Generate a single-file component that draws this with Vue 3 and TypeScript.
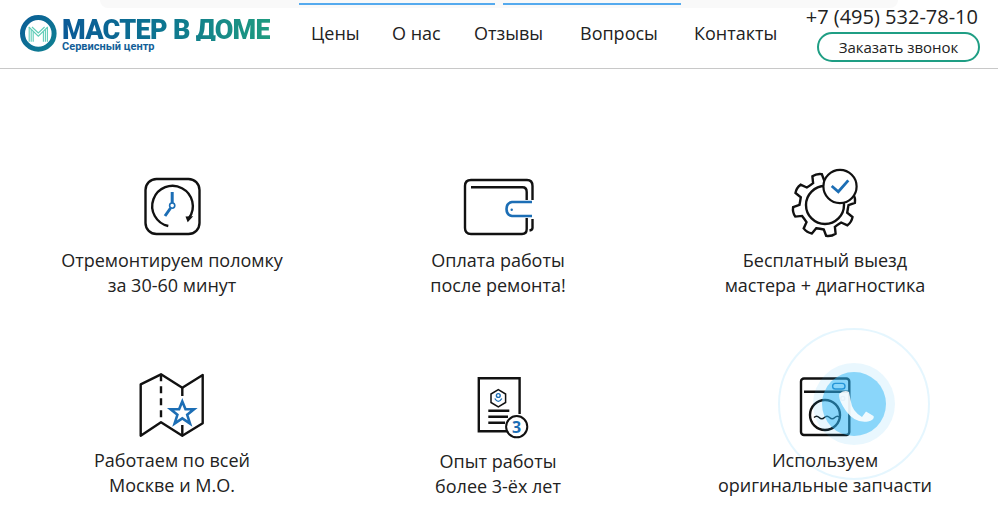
<script setup lang="ts">
const nav = ['Цены', 'О нас', 'Отзывы', 'Вопросы', 'Контакты']

function gear(cx: number, cy: number, outer: number, valley: number, teeth: number, start: number): string {
  const pts: string[] = []
  const step = (Math.PI * 2) / teeth
  for (let i = 0; i < teeth; i++) {
    const a = start + i * step
    const at = (r: number, d: number) =>
      `${(cx + r * Math.cos(a + d * step)).toFixed(1)} ${(cy + r * Math.sin(a + d * step)).toFixed(1)}`
    pts.push(`${i === 0 ? 'M' : 'L'}${at(valley, -0.3)}`)
    pts.push(`L${at(outer, -0.2)}`)
    pts.push(`Q${at(outer + 1.5, 0)} ${at(outer, 0.2)}`)
    pts.push(`L${at(valley, 0.3)}`)
    pts.push(`Q${at(valley - 0.5, 0.5)} ${at(valley, 0.7)}`)
  }
  return pts.join(' ') + ' Z'
}
const gearPath = gear(824, 205, 31, 24.5, 8, (-103 * Math.PI) / 180)
</script>

<template>
  <div class="page">
    <div class="strip">
      <span class="bar bar-a"></span>
      <span class="bar bar-b"></span>
    </div>

    <header class="header">
      <a class="logo">
        <svg class="logo-mark" viewBox="18 13 40 40" width="40" height="40">
          <defs>
            <linearGradient id="ring" x1="0" y1="0" x2="1" y2="1">
              <stop offset="0" stop-color="#0a5d96" />
              <stop offset="1" stop-color="#0f8092" />
            </linearGradient>
          </defs>
          <circle cx="38.3" cy="33.4" r="15.8" fill="none" stroke="url(#ring)" stroke-width="5" />
          <g fill="none" stroke="#5fcdb8" stroke-width="1.1">
            <path d="M29.2 41.7V27.5M31.2 41.7V29.5M33.2 41.7V31.5" />
            <path d="M47.4 41.7V27.5M45.4 41.7V29.5M43.4 41.7V31.5" />
            <path d="M28.8 27L38.3 36.2L47.8 27" />
            <path d="M32 27L38.3 33L44.6 27" />
          </g>
        </svg>
        <span class="logo-text">
          <span class="logo-name">МАСТЕР В ДОМЕ</span>
          <span class="logo-sub">Сервисный центр</span>
        </span>
      </a>

      <nav class="nav">
        <a v-for="item in nav" :key="item" class="nav-link">{{ item }}</a>
      </nav>

      <div class="contact">
        <span class="phone">+7 (495) 532-78-10</span>
        <button class="call" type="button">Заказать звонок</button>
      </div>
    </header>

    <main class="features">
      <section class="feature">
        <svg class="icon" viewBox="117 168 110 80" width="110" height="80">
          <rect x="145.5" y="179" width="54" height="55" rx="11" class="ink" />
          <path d="M168.3 226A20.3 20.3 0 1 1 189 218" class="ink" />
          <path d="M185.5 216.5L193.2 216.2L187.7 222.3Z" fill="#111" />
          <path d="M172.2 192V203M165 216L170.6 208" class="blue heavy" />
          <circle cx="172.2" cy="205.6" r="2.6" fill="#fff" stroke="#1c6eb5" stroke-width="1.6" />
        </svg>
        <p>Отремонтируем поломку<br />за 30-60 минут</p>
      </section>

      <section class="feature">
        <svg class="icon" viewBox="443 168 110 80" width="110" height="80">
          <path d="M532.5 200V186Q532.5 180 527 180H471Q465 180 465 186V228Q465 234 471 234H522Q526.7 234 526.7 229V218" class="ink" />
          <path d="M471 187.3H522.5Q526.7 187.3 526.7 192V200M532.5 219V228Q532.5 230 529.5 230.5" class="ink" />
          <path d="M532 202H512Q506.5 203 506.5 209Q506.5 215 512 216H532" class="blue" />
          <circle cx="511.7" cy="209.7" r="1.2" fill="#1c6eb5" />
        </svg>
        <p>Оплата работы<br />после ремонта!</p>
      </section>

      <section class="feature">
        <svg class="icon" viewBox="770 168 110 80" width="110" height="80">
          <path :d="gearPath" class="ink" />
          <circle cx="825" cy="205" r="19" class="ink" />
          <circle cx="840" cy="186.5" r="16.6" fill="#fff" stroke="#111" stroke-width="2.2" />
          <path d="M831.7 186L838.3 191.7L848.3 180.3" class="blue wide" />
        </svg>
        <p>Бесплатный выезд<br />мастера + диагностика</p>
      </section>

      <section class="feature">
        <svg class="icon" viewBox="117 364 110 84" width="110" height="84">
          <path d="M140.7 384.3L161 374.3L182.3 387.7L202.7 375V423.3L182.3 435.7L161 422.3L140.7 435.7Z" class="ink" stroke-linejoin="round" />
          <path d="M161 374.3V422.3" class="ink" stroke-dasharray="7 5" />
          <path d="M182.3 387.7V396M182.3 425V435.7" class="ink" />
          <path d="M182.3 401.5L185.5 409.3H194L187.2 414.8L190 423.5L182.3 418.3L174.6 423.5L177.4 414.8L170.6 409.3H179.1Z" fill="#fff" stroke="#1c6eb5" stroke-width="2.6" stroke-linejoin="miter" />
        </svg>
        <p>Работаем по всей<br />Москве и М.О.</p>
      </section>

      <section class="feature shifted">
        <svg class="icon" viewBox="443 365 110 84" width="110" height="84">
          <path d="M507 431.3H478.8V378.3H519.6V414" class="ink" />
          <path d="M488.3 410.7H509.3M488.3 416.7H508M488.3 422.7H505" class="ink" />
          <path d="M498.3 389.7L505.6 394V402.5L498.3 406.8L491 402.5V394Z" class="ink thin-ink" />
          <circle cx="498.3" cy="395.5" r="1.9" class="blue thin" />
          <path d="M494.8 398.5Q498.3 404.3 501.8 398.5" class="blue thin" />
          <circle cx="516.7" cy="426.7" r="10.6" fill="#fff" stroke="#111" stroke-width="2" />
          <text x="516.7" y="432.6" text-anchor="middle" class="three">3</text>
        </svg>
        <p>Опыт работы<br />более 3-ёх лет</p>
      </section>

      <section class="feature">
        <svg class="icon" viewBox="770 364 110 84" width="110" height="84">
          <rect x="801" y="378.5" width="48.3" height="56.5" rx="3" class="ink" />
          <path d="M804 391.7H849" class="ink" />
          <rect x="832.6" y="383.4" width="12.4" height="5.6" rx="2.8" class="blue thin" />
          <circle cx="842.8" cy="398.4" r="2" class="blue thin" />
          <circle cx="825" cy="415" r="15" class="ink" />
          <path d="M814 417.5q2.6-2.5 5.2 0t5.2 0t5.2 0t5.2 0t5.2 0" class="ink thin-ink" />
        </svg>
        <p>Используем<br />оригинальные запчасти</p>
      </section>
    </main>

    <div class="callback" aria-hidden="true">
      <span class="pulse"></span>
      <span class="halo"></span>
      <span class="disc"></span>
      <svg class="handset" viewBox="778 328 152 152" width="152" height="152">
        <path d="M839.5 393.5Q845 389.5 849 392L851 402Q852 411 862 417L866 411.5L873.5 416Q875 419.5 868 421.5Q855 423.5 846 411Q837.5 399 839.5 393.5Z" fill="#fff" />
      </svg>
    </div>
  </div>
</template>

<style>
html,
body {
  margin: 0;
  background: #fff;
}
</style>

<style scoped>
.page {
  position: relative;
  width: 998px;
  height: 514px;
  overflow: hidden;
  background: #fff;
  font-family: 'Open Sans', sans-serif;
  color: #222;
}

.strip {
  position: absolute;
  left: 100px;
  top: 0;
  width: 798px;
  height: 8px;
  background: #f9f9f9;
  border-bottom-left-radius: 8px;
  border-bottom-right-radius: 8px;
}

.bar {
  position: absolute;
  top: 3px;
  height: 2px;
  background: #55aaee;
}

.bar-a {
  left: 199px;
  width: 196px;
}

.bar-b {
  left: 403px;
  width: 178px;
}

.header {
  display: flex;
  height: 68px;
  align-items: flex-start;
  border-bottom: 1px solid #c8c8c8;
  box-sizing: content-box;
}

.logo {
  display: flex;
  align-items: flex-start;
  width: 311px;
  padding: 13px 0 0 18px;
  box-sizing: border-box;
}

.logo-mark {
  flex: none;
}

.logo-text {
  display: flex;
  flex-direction: column;
  margin: 6px 0 0 4px;
}

.logo-name {
  font-family: Roboto, sans-serif;
  font-weight: 900;
  font-size: 27px;
  letter-spacing: -0.7px;
  line-height: 22px;
  white-space: nowrap;
  background: linear-gradient(90deg, #0a5a97 0%, #0d7690 50%, #1f9c80 100%);
  -webkit-background-clip: text;
  background-clip: text;
  color: transparent;
}

.logo-sub {
  font-family: Roboto, sans-serif;
  font-weight: 700;
  font-size: 11px;
  line-height: 11px;
  color: #135f98;
  white-space: nowrap;
}

.nav {
  display: grid;
  grid-template-columns: 81px 82px 106px 114px auto;
  width: 496px;
  padding-top: 21px;
}

.nav-link {
  font-size: 18px;
  line-height: 25px;
  color: #222;
  white-space: nowrap;
}

.contact {
  display: flex;
  flex-direction: column;
  align-items: flex-end;
  width: 172px;
  margin-left: -1px;
}

.phone {
  font-size: 20px;
  line-height: 25px;
  margin-top: 4px;
  white-space: nowrap;
}

.call {
  width: 163px;
  height: 30px;
  margin: 3px -2px 0 0;
  padding: 0;
  border: 2px solid #1f9e84;
  border-radius: 15px;
  background: #fff;
  font: 15px 'Open Sans', sans-serif;
  color: #222;
}

.features {
  display: grid;
  grid-template-columns: 344px 308px 346px;
  grid-template-rows: 229px 200px;
  text-align: center;
}

.feature {
  position: relative;
  display: flex;
  flex-direction: column;
  align-items: center;
  justify-content: flex-end;
}

.feature p {
  margin: 0;
  font-size: 18px;
  line-height: 25px;
  color: #222;
  white-space: nowrap;
}

.shifted {
  top: 1px;
}

.icon {
  display: block;
  flex: none;
}

.ink {
  fill: none;
  stroke: #111;
  stroke-width: 2.4;
}

.thin-ink {
  stroke-width: 1.5;
}

.blue {
  fill: none;
  stroke: #1c6eb5;
  stroke-width: 2.6;
}

.heavy {
  stroke-width: 3;
}

.wide {
  stroke-width: 2.8;
}

.thin {
  stroke-width: 1.4;
}

.three {
  font-family: 'Open Sans', sans-serif;
  font-weight: 700;
  font-size: 16px;
  fill: #1c6eb5;
}

.callback {
  position: absolute;
  left: 778px;
  top: 328px;
  width: 152px;
  height: 152px;
  pointer-events: none;
}

.pulse,
.halo,
.disc {
  position: absolute;
  border-radius: 50%;
  box-sizing: border-box;
}

.pulse {
  inset: 0;
  border: 2px solid rgba(43, 181, 245, 0.12);
}

.halo {
  inset: 35px;
  background: rgba(43, 181, 245, 0.1);
}

.disc {
  inset: 44px;
  background: rgba(43, 181, 245, 0.5);
}

.handset {
  position: absolute;
  inset: 0;
  opacity: 0.88;
}
</style>
